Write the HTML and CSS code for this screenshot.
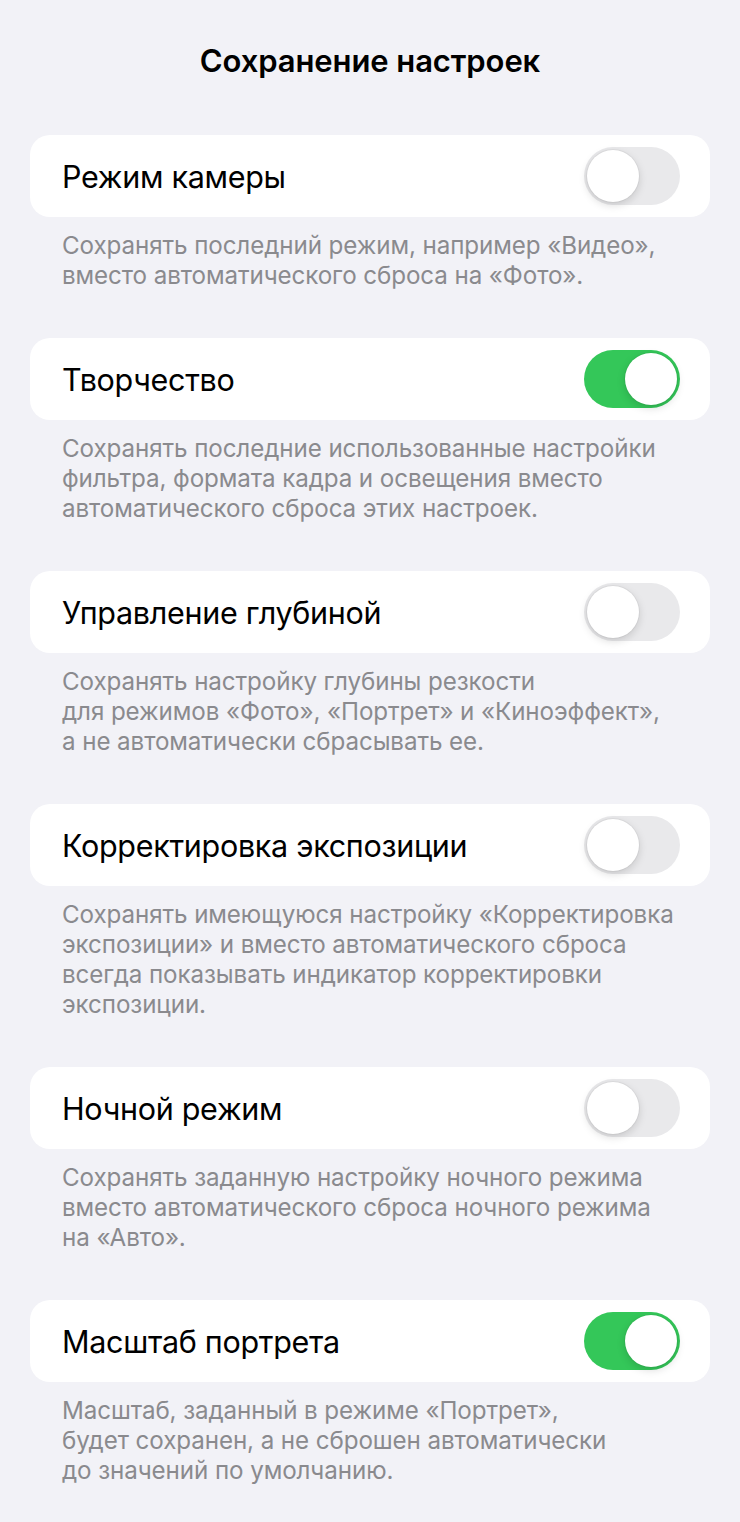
FILE: index.html
```html
<!DOCTYPE html>
<html lang="ru">
<head>
  <meta charset="UTF-8">
  <title>Сохранение настроек</title>
  <link rel="stylesheet" href="styles.css">
</head>
<body>
  <h1 class="title">Сохранение настроек</h1>

  <div class="group">
    <div class="card">
      <span class="label">Режим камеры</span>
      <span class="switch"><span class="knob"></span></span>
    </div>
    <p class="note">Сохранять последний режим, например «Видео»,<br>вместо автоматического сброса на «Фото».</p>
  </div>

  <div class="group">
    <div class="card">
      <span class="label">Творчество</span>
      <span class="switch on"><span class="knob"></span></span>
    </div>
    <p class="note">Сохранять последние использованные настройки<br>фильтра, формата кадра и освещения вместо<br>автоматического сброса этих настроек.</p>
  </div>

  <div class="group">
    <div class="card">
      <span class="label">Управление глубиной</span>
      <span class="switch"><span class="knob"></span></span>
    </div>
    <p class="note">Сохранять настройку глубины резкости<br>для режимов «Фото», «Портрет» и «Киноэффект»,<br>а не автоматически сбрасывать ее.</p>
  </div>

  <div class="group">
    <div class="card">
      <span class="label">Корректировка экспозиции</span>
      <span class="switch"><span class="knob"></span></span>
    </div>
    <p class="note">Сохранять имеющуюся настройку «Корректировка<br>экспозиции» и вместо автоматического сброса<br>всегда показывать индикатор корректировки<br>экспозиции.</p>
  </div>

  <div class="group">
    <div class="card">
      <span class="label">Ночной режим</span>
      <span class="switch"><span class="knob"></span></span>
    </div>
    <p class="note">Сохранять заданную настройку ночного режима<br>вместо автоматического сброса ночного режима<br>на «Авто».</p>
  </div>

  <div class="group">
    <div class="card">
      <span class="label">Масштаб портрета</span>
      <span class="switch on"><span class="knob"></span></span>
    </div>
    <p class="note">Масштаб, заданный в режиме «Портрет»,<br>будет сохранен, а не сброшен автоматически<br>до значений по умолчанию.</p>
  </div>
</body>
</html>
```

FILE: styles.css
```css
body {
  margin: 0;
  padding: 0 30px;
  background-color: #f2f2f7;
  font-family: Inter, "Noto Sans", sans-serif;
  color: #000;
}
.title {
  margin: 0;
  padding-top: 43px;
  height: 135px;
  box-sizing: border-box;
  font-size: 31px;
  line-height: 36px;
  font-weight: 600;
  text-align: center;
  letter-spacing: -0.1px;
}
.card {
  display: flex;
  align-items: center;
  justify-content: space-between;
  height: 82px;
  padding: 0 30px 0 32px;
  background: #fff;
  border-radius: 20px;
}
.label {
  font-size: 30.5px;
  letter-spacing: -0.3px;
}
.note {
  margin: 14px 0 47px;
  padding-left: 32px;
  font-size: 24.2px;
  line-height: 30px;
  color: #8a8a8e;
  letter-spacing: -0.1px;
}
.switch {
  position: relative;
  width: 96px;
  height: 58px;
  border-radius: 29px;
  background: #e9e9eb;
}
.switch .knob {
  position: absolute;
  top: 3px;
  left: 3px;
  width: 52px;
  height: 52px;
  border-radius: 50%;
  background: #fff;
  box-shadow: 0 3px 8px rgba(0, 0, 0, 0.15), 0 0 0 1px rgba(0, 0, 0, 0.04);
}
.switch.on {
  background: #34c759;
}
.switch.on .knob {
  left: 41px;
}
```
